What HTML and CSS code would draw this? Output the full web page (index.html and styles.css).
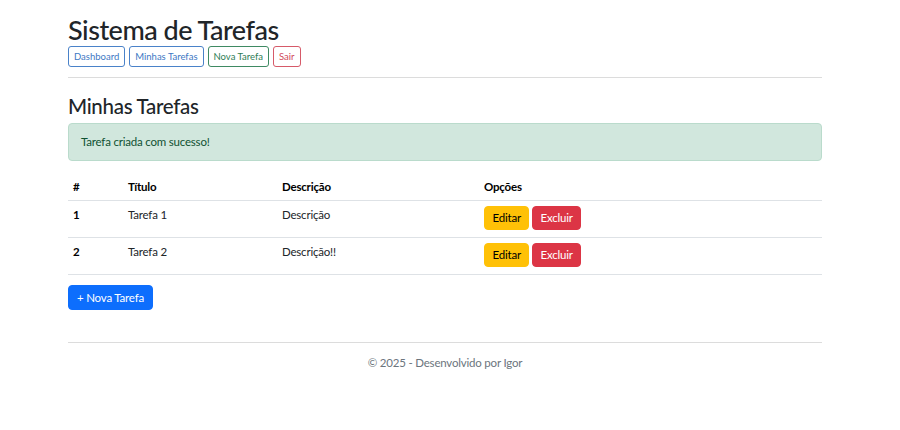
FILE: index.html
```html
<!DOCTYPE html>
<html lang="pt-br">
<head>
<meta charset="utf-8">
<title>Sistema de Tarefas</title>
<link rel="stylesheet" href="styles.css">
</head>
<body>
<div class="container">
  <header class="header">
    <h1 class="title">Sistema de Tarefas</h1>
    <nav class="nav">
      <a class="btn-o btn-o-primary" href="#">Dashboard</a>
      <a class="btn-o btn-o-primary" href="#">Minhas Tarefas</a>
      <a class="btn-o btn-o-success" href="#">Nova Tarefa</a>
      <a class="btn-o btn-o-danger" href="#">Sair</a>
    </nav>
  </header>
  <hr class="rule">
  <main>
    <h2 class="subtitle">Minhas Tarefas</h2>
    <div class="alert">Tarefa criada com sucesso!</div>
    <table class="table">
      <thead>
        <tr><th class="c-id">#</th><th class="c-title">Título</th><th class="c-desc">Descrição</th><th>Opções</th></tr>
      </thead>
      <tbody>
        <tr>
          <th class="c-id">1</th><td>Tarefa 1</td><td>Descrição</td>
          <td class="c-act"><div class="actions"><a class="btn btn-warning" href="#">Editar</a><a class="btn btn-danger" href="#">Excluir</a></div></td>
        </tr>
        <tr>
          <th class="c-id">2</th><td>Tarefa 2</td><td>Descrição!!</td>
          <td class="c-act"><div class="actions"><a class="btn btn-warning" href="#">Editar</a><a class="btn btn-danger" href="#">Excluir</a></div></td>
        </tr>
      </tbody>
    </table>
    <a class="btn btn-primary" href="#">+ Nova Tarefa</a>
  </main>
  <footer class="footer">© 2025 - Desenvolvido por Igor</footer>
</div>
</body>
</html>
```
FILE: styles.css
```css
* { box-sizing: border-box; }
body {
  margin: 0;
  font-family: Lato, "Noto Sans", sans-serif;
  font-size: 11.5px;
  letter-spacing: -0.2px;
  color: #212529;
  background: #fff;
}
.container {
  margin: 0 78px 0 68px;
  padding-top: 14px;
}
.title {
  margin: 0 0 1px;
  font-size: 27px;
  letter-spacing: -0.5px;
  font-weight: 500;
  line-height: 31px;
}
.nav { display: flex; gap: 4px; }
.btn-o {
  display: inline-block;
  padding: 2px 5px;
  font-size: 9.5px;
  letter-spacing: 0;
  line-height: 15px;
  border: 1px solid;
  border-radius: 3px;
  text-decoration: none;
  background: #fff;
}
.btn-o-primary { color: #3d78c4; border-color: #4a82c9; }
.btn-o-success { color: #2e7d55; border-color: #3f8a63; }
.btn-o-danger { color: #d0495a; border-color: #d65a69; }
.rule {
  margin: 10px 0 16px;
  border: 0;
  border-top: 1px solid #dcdcdc;
}
.subtitle {
  margin: 0 0 4px;
  font-size: 20.5px;
  letter-spacing: -0.3px;
  font-weight: 500;
  line-height: 25px;
}
.alert {
  padding: 11px 12px;
  background: #d1e7dd;
  border: 1px solid #badbcc;
  border-radius: 4px;
  color: #0f5132;
  line-height: 14px;
  margin-bottom: 13px;
}
.table {
  width: 100%;
  border-collapse: collapse;
  margin-bottom: 10px;
}
.table th, .table td {
  text-align: left;
  padding: 6px 5px;
  border-bottom: 1px solid #dee2e6;
  vertical-align: top;
  line-height: 14px;
}
.table th { font-weight: 700; color: #000; }
.table tbody td, .table tbody th { padding: 7px 5px 15px; }
.table tbody td.c-act { padding: 5px 5px 6px; }
.c-id { width: 55px; }
.c-title { width: 154px; }
.c-desc { width: 202px; }
.actions { display: flex; gap: 3px; }
.btn {
  display: inline-block;
  padding: 4px 7.5px;
  font-size: 11.5px;
  line-height: 14px;
  border: 1px solid transparent;
  border-radius: 4px;
  text-decoration: none;
}
.btn-warning { background: #ffc107; border-color: #ffc107; color: #000; }
.btn-danger { background: #dc3545; border-color: #dc3545; color: #fff; padding-left: 7px; padding-right: 7px; }
.btn-primary { background: #0d6efd; border-color: #0d6efd; color: #fff; padding: 5px 8px; line-height: 13px; }
.footer {
  margin-top: 32px;
  border-top: 1px solid #dcdcdc;
  padding-top: 13px;
  text-align: center;
  color: #6c757d;
  line-height: 14px;
}
```
